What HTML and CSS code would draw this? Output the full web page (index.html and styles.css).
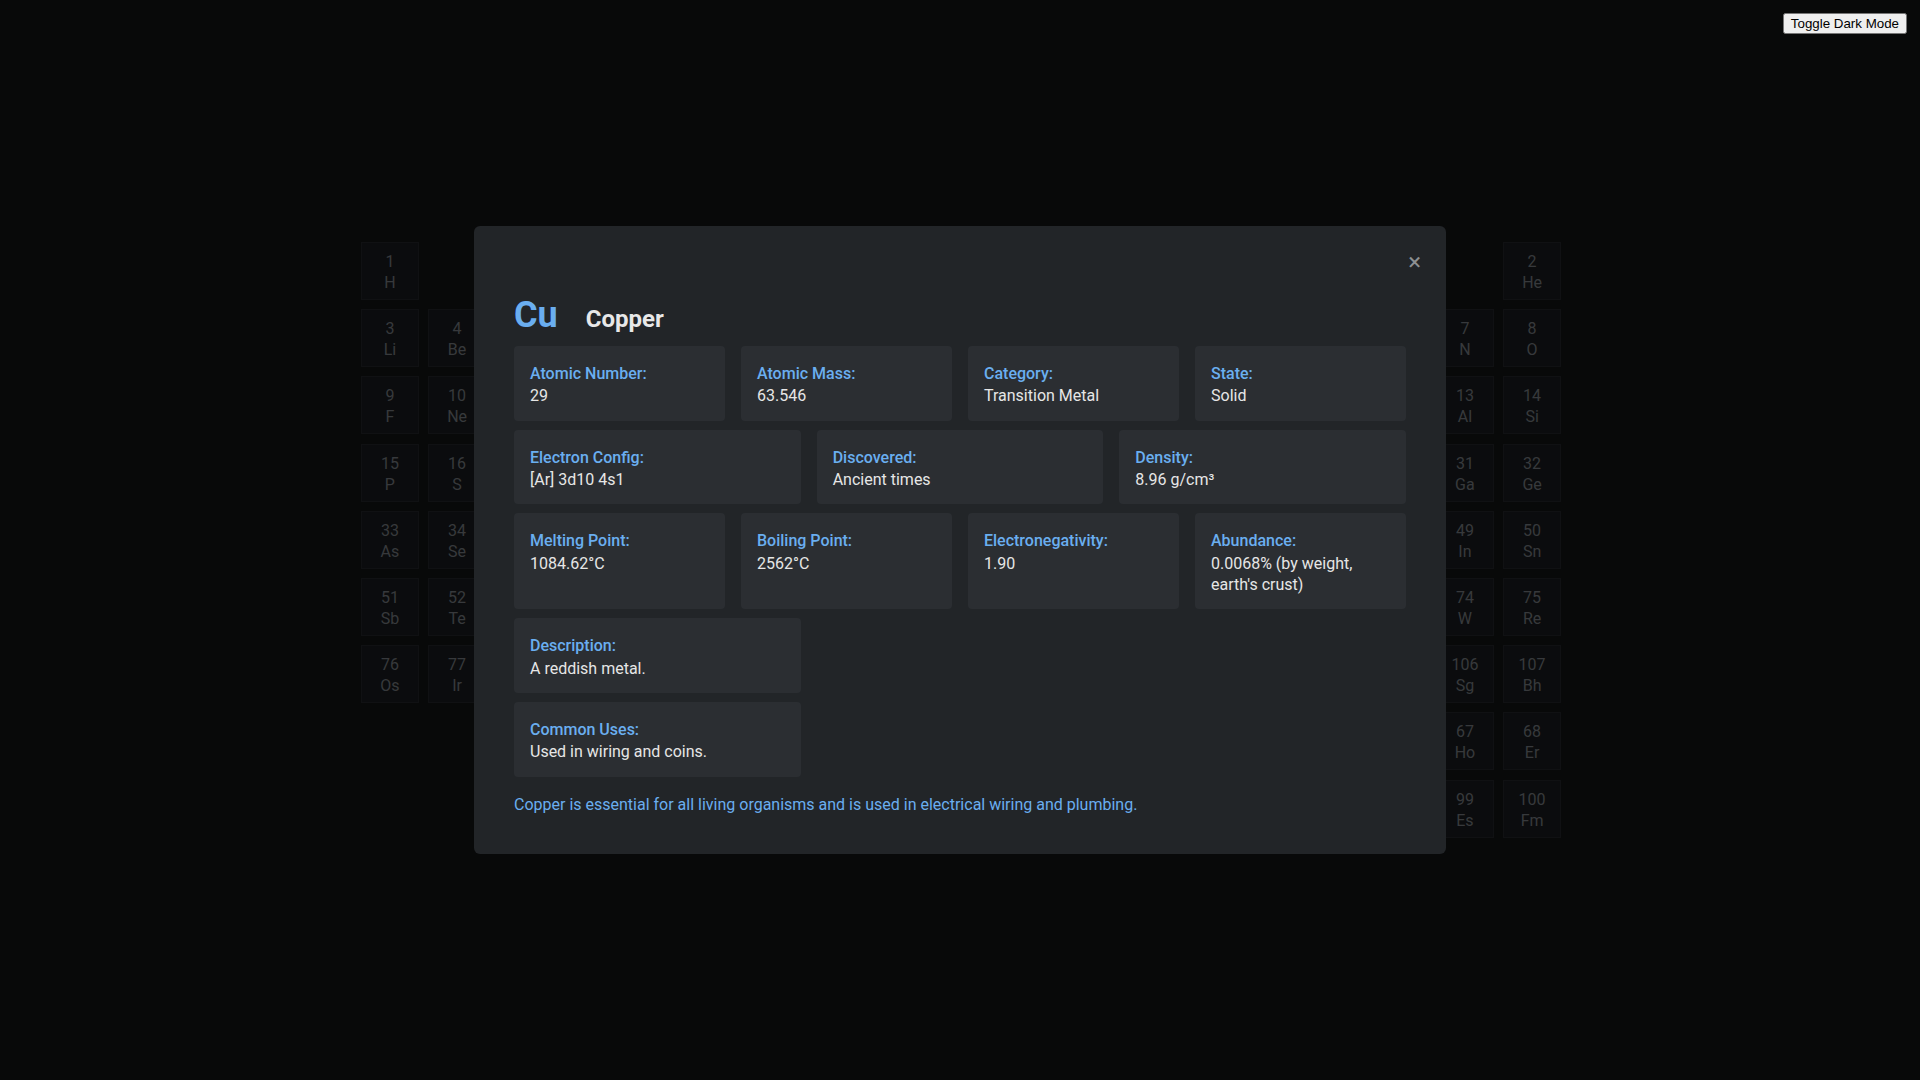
FILE: index.html
```html
<!DOCTYPE html>
<html lang="en">
<head>
<meta charset="utf-8">
<title>Periodic Table</title>
<link rel="stylesheet" href="styles.css">
</head>
<body>
<button class="theme-toggle">Toggle Dark Mode</button>
<main class="table">
  <div class="el c1"><span>1</span><span>H</span></div>
  <div class="el c18"><span>2</span><span>He</span></div>
  <div class="el c1"><span>3</span><span>Li</span></div>
  <div class="el c2"><span>4</span><span>Be</span></div>
  <div class="el c17"><span>7</span><span>N</span></div>
  <div class="el c18"><span>8</span><span>O</span></div>
  <div class="el c1"><span>9</span><span>F</span></div>
  <div class="el c2"><span>10</span><span>Ne</span></div>
  <div class="el c17"><span>13</span><span>Al</span></div>
  <div class="el c18"><span>14</span><span>Si</span></div>
  <div class="el c1"><span>15</span><span>P</span></div>
  <div class="el c2"><span>16</span><span>S</span></div>
  <div class="el c17"><span>31</span><span>Ga</span></div>
  <div class="el c18"><span>32</span><span>Ge</span></div>
  <div class="el c1"><span>33</span><span>As</span></div>
  <div class="el c2"><span>34</span><span>Se</span></div>
  <div class="el c17"><span>49</span><span>In</span></div>
  <div class="el c18"><span>50</span><span>Sn</span></div>
  <div class="el c1"><span>51</span><span>Sb</span></div>
  <div class="el c2"><span>52</span><span>Te</span></div>
  <div class="el c17"><span>74</span><span>W</span></div>
  <div class="el c18"><span>75</span><span>Re</span></div>
  <div class="el c1"><span>76</span><span>Os</span></div>
  <div class="el c2"><span>77</span><span>Ir</span></div>
  <div class="el c17"><span>106</span><span>Sg</span></div>
  <div class="el c18"><span>107</span><span>Bh</span></div>
  <div class="el c17"><span>67</span><span>Ho</span></div>
  <div class="el c18"><span>68</span><span>Er</span></div>
  <div class="el c17"><span>99</span><span>Es</span></div>
  <div class="el c18"><span>100</span><span>Fm</span></div>
</main>

<div class="overlay">
  <section class="modal">
    <button class="close" aria-label="Close">&times;</button>
    <header class="modal-head">
      <span class="symbol">Cu</span>
      <h2 class="name">Copper</h2>
    </header>
    <div class="grid four">
      <div class="card"><div class="label">Atomic Number:</div><div class="value">29</div></div>
      <div class="card"><div class="label">Atomic Mass:</div><div class="value">63.546</div></div>
      <div class="card"><div class="label">Category:</div><div class="value">Transition Metal</div></div>
      <div class="card"><div class="label">State:</div><div class="value">Solid</div></div>
    </div>
    <div class="grid three">
      <div class="card"><div class="label">Electron Config:</div><div class="value">[Ar] 3d10 4s1</div></div>
      <div class="card"><div class="label">Discovered:</div><div class="value">Ancient times</div></div>
      <div class="card"><div class="label">Density:</div><div class="value">8.96 g/cm³</div></div>
    </div>
    <div class="grid four">
      <div class="card"><div class="label">Melting Point:</div><div class="value">1084.62°C</div></div>
      <div class="card"><div class="label">Boiling Point:</div><div class="value">2562°C</div></div>
      <div class="card"><div class="label">Electronegativity:</div><div class="value">1.90</div></div>
      <div class="card"><div class="label">Abundance:</div><div class="value">0.0068% (by weight, earth's crust)</div></div>
    </div>
    <div class="grid three">
      <div class="card"><div class="label">Description:</div><div class="value">A reddish metal.</div></div>
    </div>
    <div class="grid three">
      <div class="card"><div class="label">Common Uses:</div><div class="value">Used in wiring and coins.</div></div>
    </div>
    <p class="fact">Copper is essential for all living organisms and is used in electrical wiring and plumbing.</p>
  </section>
</div>
</body>
</html>
```

FILE: styles.css
```css
* { box-sizing: border-box; }
html, body { margin: 0; height: 100%; }
body {
  background: #101213;
  font-family: Roboto, "Open Sans", sans-serif;
  font-size: 16px;
  line-height: 1.333;
  color: #e6e6e6;
}
.theme-toggle {
  position: fixed;
  top: 13px;
  right: 13px;
  z-index: 20;
  font-family: "Liberation Sans", Arial, sans-serif;
}
.table {
  display: grid;
  grid-template-columns: repeat(18, 58px);
  grid-auto-rows: 58px;
  gap: 9.2px;
  justify-content: center;
  padding: 242px 0 0 2px;
}
.el {
  display: flex;
  flex-direction: column;
  align-items: center;
  justify-content: center;
  padding-top: 2px;
  background: #17191c;
  border: 1px solid #202327;
  color: #6e7378;
  font-size: 16px;
  line-height: 21px;
}
.c1 { grid-column-start: 1; }
.c2 { grid-column-start: 2; }
.c17 { grid-column-start: 17; }
.c18 { grid-column-start: 18; }
.overlay {
  position: fixed;
  inset: 0;
  background: rgba(0, 0, 0, 0.5);
  display: flex;
  align-items: center;
  justify-content: center;
  z-index: 10;
}
.modal {
  position: relative;
  width: 972px;
  padding: 40px 40px 39px;
  background: #222528;
  border-radius: 6px;
}
.close {
  position: absolute;
  top: 20px;
  right: 21px;
  background: none;
  border: 0;
  color: #8c8f92;
  font-family: Roboto, sans-serif;
  font-size: 24px;
  line-height: 32px;
  padding: 0 4px;
}
.modal-head {
  display: flex;
  align-items: baseline;
  gap: 28px;
  margin: 31px 0 13px;
  line-height: 1;
}
.symbol {
  font-size: 36px;
  font-weight: 700;
  color: #6aaef0;
}
.name {
  margin: 0;
  font-size: 24px;
  font-weight: 700;
  color: #e8e8e8;
}
.grid {
  display: grid;
  gap: 16px;
  margin-bottom: 9px;
}
.four { grid-template-columns: repeat(4, 1fr); }
.three { grid-template-columns: repeat(3, 1fr); }
.card {
  background: #2b2e32;
  border-radius: 4px;
  padding: 17px 16px 14px;
}
.label {
  color: #6aaef0;
  font-weight: 500;
  margin-bottom: 1px;
}
.value { color: #e6e6e6; }
.fact {
  margin: 17px 0 0;
  color: #6aaef0;
}
```
